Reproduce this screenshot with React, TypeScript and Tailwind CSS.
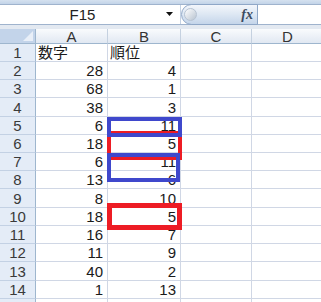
import React from "react";

const data: [string, string, string][] = [
  ["1", "数字", "順位"],
  ["2", "28", "4"],
  ["3", "68", "1"],
  ["4", "38", "3"],
  ["5", "6", "11"],
  ["6", "18", "5"],
  ["7", "6", "11"],
  ["8", "13", "6"],
  ["9", "8", "10"],
  ["10", "18", "5"],
  ["11", "16", "7"],
  ["12", "11", "9"],
  ["13", "40", "2"],
  ["14", "1", "13"],
  ["", "", ""],
];

const rowH = ["h-[18px]", "h-[18px]", "h-[18px]", "h-[19px]", "h-[18px]", "h-[18px]", "h-[18px]", "h-[18px]", "h-[19px]", "h-[18px]", "h-[18px]", "h-[18px]", "h-[19px]", "h-[18px]", "h-[18px]"];

export default function App() {
  return (
    <div
      className="relative w-[321px] h-[302px] overflow-hidden bg-white text-[15px] text-[#1a1a1a]"
      style={{ fontFamily: '"Liberation Sans", "Noto Sans CJK JP", sans-serif' }}
    >
      {/* formula bar area */}
      <div className="h-[4px] bg-gradient-to-b from-[#d5e1ef] to-[#c2d3e8]" />
      <div className="flex h-[21px] border-y border-[#9fb3cd] bg-white">
        <div className="w-[181px] flex items-center border-r border-[#c5d2e3]">
          <div className="w-[165px] text-center text-[15px] leading-none text-[#222]">F15</div>
          <svg width="8" height="5" viewBox="0 0 8 5" className="ml-[1px]">
            <polygon points="0,0 7,0 3.5,4" fill="#111" />
          </svg>
        </div>
        <div className="w-[77px] -my-[1px] flex items-center justify-between rounded-l-full border border-[#8fa7c7] bg-gradient-to-b from-[#f3f6fb] via-[#dde7f3] to-[#c4d5ea] pl-[2px] pr-[4px]">
          <div className="w-[13px] h-[13px] rounded-full border border-[#b7c3d2] bg-gradient-to-br from-[#ffffff] to-[#b9c4d1]" />
          <span
            className="text-[14px] italic font-bold leading-none text-[#3b4b61]"
            style={{ fontFamily: '"Liberation Serif", serif' }}
          >
            fx
          </span>
        </div>
        <div className="flex-1 bg-white" />
      </div>
      <div className="h-[4px] bg-[#e3e9f1]" />

      {/* grid */}
      <div className="grid grid-cols-[36px_72px_73px_71px_72px]">
        <div className="relative h-[15px] bg-[#c3d4ea] border-r border-b border-[#9eb6ce]">
          <svg width="10" height="10" viewBox="0 0 10 10" className="absolute right-[2px] bottom-[2px]">
            <polygon points="10,0 10,10 0,10" fill="#e9eff8" />
          </svg>
        </div>
        {["A", "B", "C", "D"].map((c) => (
          <div
            key={c}
            className="h-[15px] flex items-center justify-center bg-gradient-to-b from-[#f9fbfd] to-[#e1e8f2] border-r border-b border-r-[#c5d1e0] border-b-[#9eb6ce] text-[15px] leading-none text-[#333]"
          >
            {c}
          </div>
        ))}
        {data.map(([n, a, b], i) => {
          const left = i === 0;
          return (
            <React.Fragment key={i}>
              <div
                className={`${rowH[i]} flex items-center justify-center bg-[#e4ecf7] border-r border-b border-r-[#9eb6ce] border-b-[#c3d1e4] leading-none text-[#3a3a3a]`}
              >
                {n}
              </div>
              <div
                className={`${rowH[i]} flex items-center ${left ? "justify-start pl-[2px]" : "justify-end pr-[4px]"} border-r border-b border-[#d0d7e5] leading-none`}
              >
                {a}
              </div>
              <div
                className={`${rowH[i]} flex items-center ${left ? "justify-start pl-[2px]" : "justify-end pr-[4px]"} border-r border-b border-[#d0d7e5] leading-none`}
              >
                {b}
              </div>
              <div className={`${rowH[i]} border-r border-b border-[#d0d7e5]`} />
              <div className={`${rowH[i]} border-r border-b border-[#d0d7e5]`} />
            </React.Fragment>
          );
        })}
      </div>

      {/* annotation rectangles */}
      <div className="absolute left-[107px] top-[131px] w-[75px] h-[29px] border-[4px] border-[#ed1c24]" />
      <div className="absolute left-[107px] top-[117px] w-[75px] h-[20px] border-[4px] border-[#3f48cc]" />
      <div className="absolute left-[107px] top-[153px] w-[73px] h-[29px] border-[4px] border-[#3f48cc]" />
      <div className="absolute left-[107px] top-[203px] w-[75px] h-[27px] border-[5px] border-[#ed1c24]" />
    </div>
  );
}
